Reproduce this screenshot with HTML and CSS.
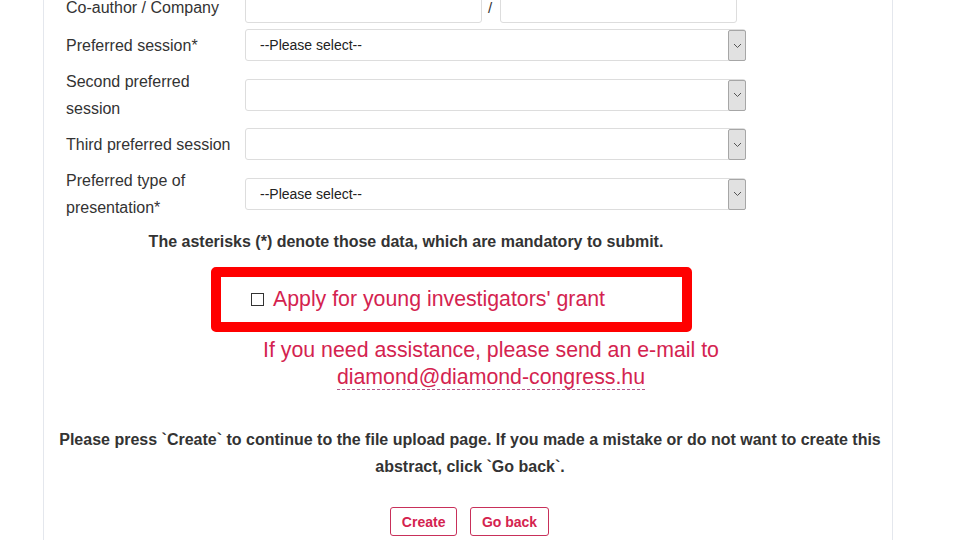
FILE: index.html
```html
<html>
    <head>
        <meta name="viewport" content="width=device-width, initial-scale=1.0">
        <link rel="stylesheet" href="styles.css">
    </head>
    <body>
        <div class="container">
            <div class="form">
                <div class="row">
                    <label>Co-author / Company</label>
                    <div class="pair">
                        <input type="text">
                        <span class="slash">/</span>
                        <input type="text">
                    </div>
                </div>
                <div class="row">
                    <label>Preferred session*</label>
                    <div class="select-wrap">
                        <select><option>--Please select--</option></select>
                        <span class="arrow"><svg width="9" height="6" viewBox="0 0 9 6"><path d="M1 1 L4.5 4.5 L8 1" fill="none" stroke="#555" stroke-width="1"/></svg></span>
                    </div>
                </div>
                <div class="row">
                    <label>Second preferred session</label>
                    <div class="select-wrap">
                        <select><option></option></select>
                        <span class="arrow"><svg width="9" height="6" viewBox="0 0 9 6"><path d="M1 1 L4.5 4.5 L8 1" fill="none" stroke="#555" stroke-width="1"/></svg></span>
                    </div>
                </div>
                <div class="row">
                    <label>Third preferred session</label>
                    <div class="select-wrap">
                        <select><option></option></select>
                        <span class="arrow"><svg width="9" height="6" viewBox="0 0 9 6"><path d="M1 1 L4.5 4.5 L8 1" fill="none" stroke="#555" stroke-width="1"/></svg></span>
                    </div>
                </div>
                <div class="row">
                    <label>Preferred type of presentation*</label>
                    <div class="select-wrap">
                        <select><option>--Please select--</option></select>
                        <span class="arrow"><svg width="9" height="6" viewBox="0 0 9 6"><path d="M1 1 L4.5 4.5 L8 1" fill="none" stroke="#555" stroke-width="1"/></svg></span>
                    </div>
                </div>
                <p class="mandatory">The asterisks (*) denote those data, which are mandatory to submit.</p>
            </div>

            <div class="grant-box">
                <span class="check"></span>
                <span>Apply for young investigators' grant</span>
            </div>

            <p class="assist">
                If you need assistance, please send an e-mail to<br>
                <a href="#">diamond@diamond-congress.hu</a>
            </p>

            <p class="notice">Please press `Create` to continue to the file upload page. If you made a mistake or do not want to create this abstract, click `Go back`.</p>

            <div class="buttons">
                <button>Create</button>
                <button>Go back</button>
            </div>
        </div>
    </body>
</html>
```

FILE: styles.css
```css
body {
    margin: 0;
    background: #fff;
    font-family: "Liberation Sans", Arial, sans-serif;
    color: #333;
}

div.container {
    box-sizing: border-box;
    margin: -12px 0 0 43px;
    width: 850px;
    min-height: 600px;
    border-left: 1px solid #e4e7ed;
    border-right: 1px solid #e4e7ed;
    padding: 0 22px;
}

div.form {
    width: 680px;
}

div.row {
    display: grid;
    grid-template-columns: 179px 501px;
    align-items: center;
    padding: 3px 0;
}

div.row label {
    font-size: 16px;
    line-height: 27px;
    padding: 0.5px 8px 0.5px 0;
}

div.pair {
    display: flex;
    align-items: center;
}

div.pair input {
    width: 237px;
    height: 32px;
    border: 1px solid #ddd;
    border-radius: 3px;
    font-size: 14px;
}

span.slash {
    width: 18px;
    padding-right: 2px;
    box-sizing: border-box;
    text-align: center;
    font-size: 15px;
    color: #333;
}

div.select-wrap {
    position: relative;
    height: 32px;
}

div.select-wrap select {
    -webkit-appearance: none;
    appearance: none;
    width: 100%;
    height: 32px;
    border: 1px solid #ddd;
    border-radius: 3px;
    background: #fff;
    padding: 0 0 0 14px;
    font-family: "Liberation Sans", Arial, sans-serif;
    font-size: 14px;
    color: #222;
}

span.arrow {
    position: absolute;
    top: 1px;
    right: 0;
    width: 16px;
    height: 29px;
    background: #e1e1e1;
    border: 1px solid #a6a6a6;
    border-radius: 2px;
    display: flex;
    align-items: center;
    justify-content: center;
}

p.mandatory {
    margin: 8px 0 0;
    text-align: center;
    font-size: 16px;
    font-weight: bold;
    line-height: 20px;
    color: #333;
}

div.grant-box {
    margin: 15px 0 0 145px;
    width: 441px;
    height: 45px;
    border: 10px solid #ff0000;
    border-radius: 5px;
    display: flex;
    align-items: center;
    padding-left: 20px;
    box-sizing: content-box;
    font-size: 21.3px;
    color: #d4234f;
}

span.check {
    width: 11px;
    height: 11px;
    border: 1px solid #333;
    margin: 0 9px 0 10px;
}

p.assist {
    margin: 5px 0 0 165px;
    width: 520px;
    text-align: center;
    font-size: 21.3px;
    line-height: 27px;
    color: #d4234f;
}

p.assist a {
    color: #d4234f;
    text-decoration: none;
    border-bottom: 1px dashed #b35a8c;
}

p.notice {
    margin: 35px -14px 0 -10px;
    text-align: center;
    font-size: 16px;
    font-weight: bold;
    line-height: 27px;
    color: #333;
}

div.buttons {
    margin-top: 27px;
    padding-left: 3px;
    text-align: center;
}

div.buttons button {
    height: 29px;
    padding: 0 11px;
    margin: 0 4px;
    background: #fff;
    border: 1px solid #c8305a;
    border-radius: 3px;
    font-family: "Liberation Sans", Arial, sans-serif;
    font-size: 14px;
    font-weight: bold;
    color: #d4234f;
}
```
